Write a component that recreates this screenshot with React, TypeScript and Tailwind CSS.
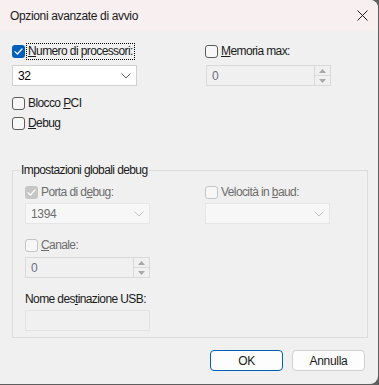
import React from "react";

const font = { fontFamily: '"Liberation Sans", Arial, sans-serif' };

function Box({ checked, disabled }: { checked?: boolean; disabled?: boolean }) {
  if (checked) {
    return (
      <span
        className={`flex h-[13px] w-[13px] shrink-0 items-center justify-center rounded-[3px] ${
          disabled ? "bg-[#c6c6c6]" : "bg-[#005fb8]"
        }`}
      >
        <svg width="9" height="7" viewBox="0 0 9 7" fill="none">
          <path d="M1 3.6 L3.4 6 L8 1" stroke="white" strokeWidth="1.2" strokeLinecap="round" strokeLinejoin="round" />
        </svg>
      </span>
    );
  }
  return (
    <span
      className={`h-[13px] w-[13px] shrink-0 rounded-[3px] border bg-[#f7f7f7] ${
        disabled ? "border-[#c4c4c4]" : "border-[#5c5c5c]"
      }`}
    />
  );
}

function Check({
  label,
  checked,
  disabled,
  focus,
}: {
  label: React.ReactNode;
  checked?: boolean;
  disabled?: boolean;
  focus?: boolean;
}) {
  return (
    <div className="flex h-[17px] items-center">
      <Box checked={checked} disabled={disabled} />
      <span
        className={`ml-[1px] px-[1px] text-[12px] leading-[15px] tracking-[-0.6px] ${
          focus ? "border border-dotted border-black" : "border border-transparent"
        } ${disabled ? "text-[#6d6d6d]" : "text-[#1a1a1a]"}`}
      >
        {label}
      </span>
    </div>
  );
}

function Chevron({ disabled }: { disabled?: boolean }) {
  return (
    <svg width="10" height="6" viewBox="0 0 10 6" fill="none">
      <path d="M0.5 0.5 L5 5 L9.5 0.5" stroke={disabled ? "#c4c4c4" : "#606060"} strokeWidth="1" />
    </svg>
  );
}

function Combo({ value, disabled }: { value: string; disabled?: boolean }) {
  return (
    <div
      className={`flex h-[21px] w-[125px] items-center justify-between border pl-[5px] pr-[5px] text-[12px] tracking-[-0.3px] ${
        disabled ? "border-[#e6e6e6] bg-[#f7f7f7] text-[#6d6d6d]" : "border-[#d0d0d0] bg-white text-black"
      }`}
    >
      <span>{value}</span>
      <Chevron disabled={disabled} />
    </div>
  );
}

function Spin({ value }: { value: string }) {
  return (
    <div className="flex h-[21px] w-[125px] items-stretch border border-[#d9d9d9] bg-[#f0f0f0] text-[12px] text-[#6d6d7d]">
      <span className="flex flex-1 items-center pl-[5px]">{value}</span>
      <div className="flex w-[16px] flex-col border-l border-[#dadada]">
        <div className="flex flex-1 items-center justify-center border-b border-[#dadada]">
          <svg width="7" height="4" viewBox="0 0 7 4"><path d="M0 4 L3.5 0 L7 4 Z" fill="#a8a8a8" /></svg>
        </div>
        <div className="flex flex-1 items-center justify-center">
          <svg width="7" height="4" viewBox="0 0 7 4"><path d="M0 0 L3.5 4 L7 0 Z" fill="#a8a8a8" /></svg>
        </div>
      </div>
    </div>
  );
}

export default function App() {
  return (
    <div className="h-[385px] w-[379px] bg-[#5e5e5e]" style={font}>
      <div className="flex h-[384px] w-[378px] flex-col overflow-hidden rounded-tr-[8px] rounded-br-[8px] bg-[#f0f0f0]">
        {/* title bar */}
        <div className="flex h-[31px] shrink-0 items-center justify-between bg-[#f7eff0] pl-[10px] pr-[10px]">
          <span className="text-[12px] tracking-[-0.35px] text-[#1a1a1a]">Opzioni avanzate di avvio</span>
          <svg width="11" height="11" viewBox="0 0 11 11" fill="none">
            <path d="M0.5 0.5 L10.5 10.5 M10.5 0.5 L0.5 10.5" stroke="#1a1a1a" strokeWidth="1" />
          </svg>
        </div>

        <div className="flex flex-col px-[12px] pt-[12px]">
          <div className="grid grid-cols-[193px_1fr]">
            <div className="flex flex-col">
              <Check checked focus label={<><u>N</u>umero di processori:</>} />
              <div className="mt-[5px]">
                <Combo value="32" />
              </div>
            </div>
            <div className="flex flex-col">
              <Check label={<><u>M</u>emoria max:</>} />
              <div className="mt-[5px] pl-[1px]">
                <Spin value="0" />
              </div>
            </div>
          </div>

          <div className="mt-[9px] flex flex-col gap-[3px]">
            <Check label={<>Blocco <u>P</u>CI</>} />
            <Check label={<><u>D</u>ebug</>} />
          </div>

          <fieldset className="mt-[30px] w-[356px] border border-[#dcdcdc] px-[12px] pb-[6px]">
            <legend className="ml-[-5px] px-[1px] text-[12px] leading-[16px] tracking-[-0.6px] text-[#1a1a1a]">
              Impostazioni globali debug
            </legend>
            <div className="mt-[6px] grid grid-cols-[180px_1fr]">
              <div className="flex flex-col">
                <Check checked disabled label={<>Porta di d<u>e</u>bug:</>} />
                <div className="mt-[2px]">
                  <Combo value="1394" disabled />
                </div>
                <div className="mt-[13px]">
                  <Check disabled label={<><u>C</u>anale:</>} />
                </div>
                <div className="mt-[3px]">
                  <Spin value="0" />
                </div>
                <div className="mt-[12px] flex h-[17px] items-center text-[12px] tracking-[-0.6px] text-[#1a1a1a]">
                  Nome des<u>t</u>inazione USB:
                </div>
                <div className="mt-[3px] h-[21px] w-[125px] border border-[#e3e3e3] bg-[#f0f0f0]" />
              </div>
              <div className="flex flex-col">
                <Check disabled label={<>Velocità in <u>b</u>aud:</>} />
                <div className="mt-[2px]">
                  <Combo value="" disabled />
                </div>
              </div>
            </div>
          </fieldset>

          <div className="mt-[12px] flex justify-end gap-[9px] pr-[1px]">
            <button className="h-[21px] w-[73px] rounded-[4px] border border-[#005fb8] bg-[#fdfdfd] text-[12px] tracking-[-0.3px] text-[#1a1a1a]">
              OK
            </button>
            <button className="h-[21px] w-[73px] rounded-[4px] border border-[#d0d0d0] bg-[#fdfdfd] text-[12px] tracking-[-0.3px] text-[#1a1a1a]">
              Annulla
            </button>
          </div>
        </div>
      </div>
    </div>
  );
}
